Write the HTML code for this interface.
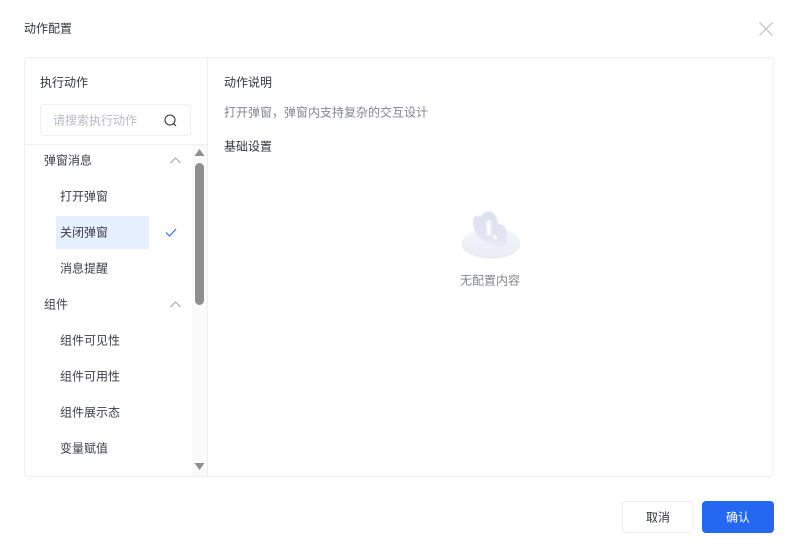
<!DOCTYPE html>
<html lang="zh-CN">
<head>
<meta charset="utf-8">
<style>
html,body{margin:0;padding:0;background:#fff;}
body{width:796px;height:555px;position:relative;overflow:hidden;font-family:"Liberation Sans","Noto Sans CJK SC",sans-serif;font-size:12px;color:#3c3e45;}
.t{position:absolute;line-height:18px;white-space:nowrap;transform:translateY(.5px);filter:blur(.3px);}
.b{position:absolute;box-sizing:border-box;}
svg{position:absolute;overflow:visible;}
</style>
</head>
<body>
<div class="t" style="left:24px;top:19px;color:#33353b;">动作配置</div>
<svg style="left:759px;top:22px" width="14" height="14" viewBox="0 0 14 14"><path d="M0.5 0.5L13.5 13.5M13.5 0.5L0.5 13.5" stroke="#c4c6cc" stroke-width="1.3" fill="none"/></svg>

<div class="b" style="left:24px;top:57px;width:750px;height:420px;border:1px solid #eeeff1;border-radius:4px;"></div>
<div class="b" style="left:207px;top:58px;width:1px;height:418px;background:#eeeff1;"></div>
<div class="b" style="left:25px;top:144px;width:182px;height:1px;background:#eeeff1;"></div>

<div class="t" style="left:40px;top:73px;color:#33353b;">执行动作</div>
<div class="b" style="left:40px;top:104px;width:151px;height:32px;border:1px solid #eeeff1;border-radius:4px;"></div>
<div class="t" style="left:53px;top:111px;color:#b9bbc1;">请搜索执行动作</div>
<svg style="left:164px;top:114px" width="13" height="13" viewBox="0 0 13 13"><circle cx="6" cy="6" r="5" stroke="#33353b" stroke-width="1.1" fill="none"/><path d="M9.6 9.6L12 12" stroke="#33353b" stroke-width="1.1" fill="none"/></svg>

<div class="b" style="left:192px;top:145px;width:15px;height:331px;background:#fafafa;"></div>
<svg style="left:194px;top:149px" width="11" height="8" viewBox="0 0 11 8"><path d="M5.5 0L10.5 7H0.5Z" fill="#8f8f8f"/></svg>
<div class="b" style="left:195px;top:163px;width:9px;height:142px;background:#8f8f8f;border-radius:5px;"></div>
<svg style="left:194px;top:463px" width="11" height="8" viewBox="0 0 11 8"><path d="M5.5 7L10.5 0H0.5Z" fill="#8f8f8f"/></svg>

<div class="t" style="left:44px;top:151px;">弹窗消息</div>
<svg style="left:170px;top:157px" width="11" height="7" viewBox="0 0 11 7"><path d="M0.5 6L5.5 1L10.5 6" stroke="#a4a6ac" stroke-width="1" fill="none"/></svg>
<div class="t" style="left:60px;top:187px;">打开弹窗</div>
<div class="b" style="left:56px;top:216px;width:93px;height:33px;background:#e6effd;"></div>
<div class="t" style="left:60px;top:223px;">关闭弹窗</div>
<svg style="left:165px;top:228px" width="12" height="9" viewBox="0 0 12 9"><path d="M1 4.5L4.5 8L11 1" stroke="#2b6cf0" stroke-width="1.1" fill="none"/></svg>
<div class="t" style="left:60px;top:259px;">消息提醒</div>
<div class="t" style="left:44px;top:295px;">组件</div>
<svg style="left:170px;top:301px" width="11" height="7" viewBox="0 0 11 7"><path d="M0.5 6L5.5 1L10.5 6" stroke="#a4a6ac" stroke-width="1" fill="none"/></svg>
<div class="t" style="left:60px;top:331px;">组件可见性</div>
<div class="t" style="left:60px;top:367px;">组件可用性</div>
<div class="t" style="left:60px;top:403px;">组件展示态</div>
<div class="t" style="left:60px;top:439px;">变量赋值</div>

<div class="t" style="left:224px;top:73px;color:#33353b;">动作说明</div>
<div class="t" style="left:224px;top:103px;color:#84868c;">打开弹窗，弹窗内支持复杂的交互设计</div>
<div class="t" style="left:224px;top:137px;color:#33353b;">基础设置</div>

<svg style="left:456px;top:206px;filter:blur(.5px)" width="70" height="56" viewBox="0 0 70 56">
<defs>
<linearGradient id="d" x1="0" y1="0" x2="0" y2="1"><stop offset="0" stop-color="#f5f6fb"/><stop offset="1" stop-color="#ebecf5"/></linearGradient>
<linearGradient id="c" x1="0" y1="0" x2="0" y2="1"><stop offset="0" stop-color="#dde0ee"/><stop offset=".75" stop-color="#e3e5f1"/><stop offset="1" stop-color="#eceef6"/></linearGradient>
</defs>
<ellipse cx="35" cy="38" rx="29" ry="14.5" fill="#e7e8f1"/>
<ellipse cx="35" cy="36.5" rx="29" ry="14.5" fill="url(#d)"/>
<path d="M17 15C17 10 21 9 25 11C26 6 33 4 37 7C41 10 42 15 42 18C47 17 51 22 51 29C51 36 51 42 48 42C42 42 30 37 25 33C20 29 17 22 17 15Z" fill="url(#c)"/>
<path d="M30 16L35 14V29L31 30Z" fill="#fbfbfe"/>
<path d="M37 28L41 31L40 34L37 32Z" fill="#fbfbfe"/>
</svg>
<div class="t" style="left:460px;top:271px;color:#84868c;">无配置内容</div>

<div class="b" style="left:622px;top:501px;width:72px;height:32px;border:1px solid #eeeff1;border-radius:4px;background:#fff;text-align:center;line-height:30px;color:#33353b;"><span style="display:inline-block;transform:translateY(.5px);filter:blur(.3px)">取消</span></div>
<div class="b" style="left:702px;top:501px;width:72px;height:32px;border-radius:4px;background:#2468f2;text-align:center;line-height:32px;color:#fff;"><span style="display:inline-block;transform:translateY(.5px);filter:blur(.3px)">确认</span></div>
</body>
</html>
